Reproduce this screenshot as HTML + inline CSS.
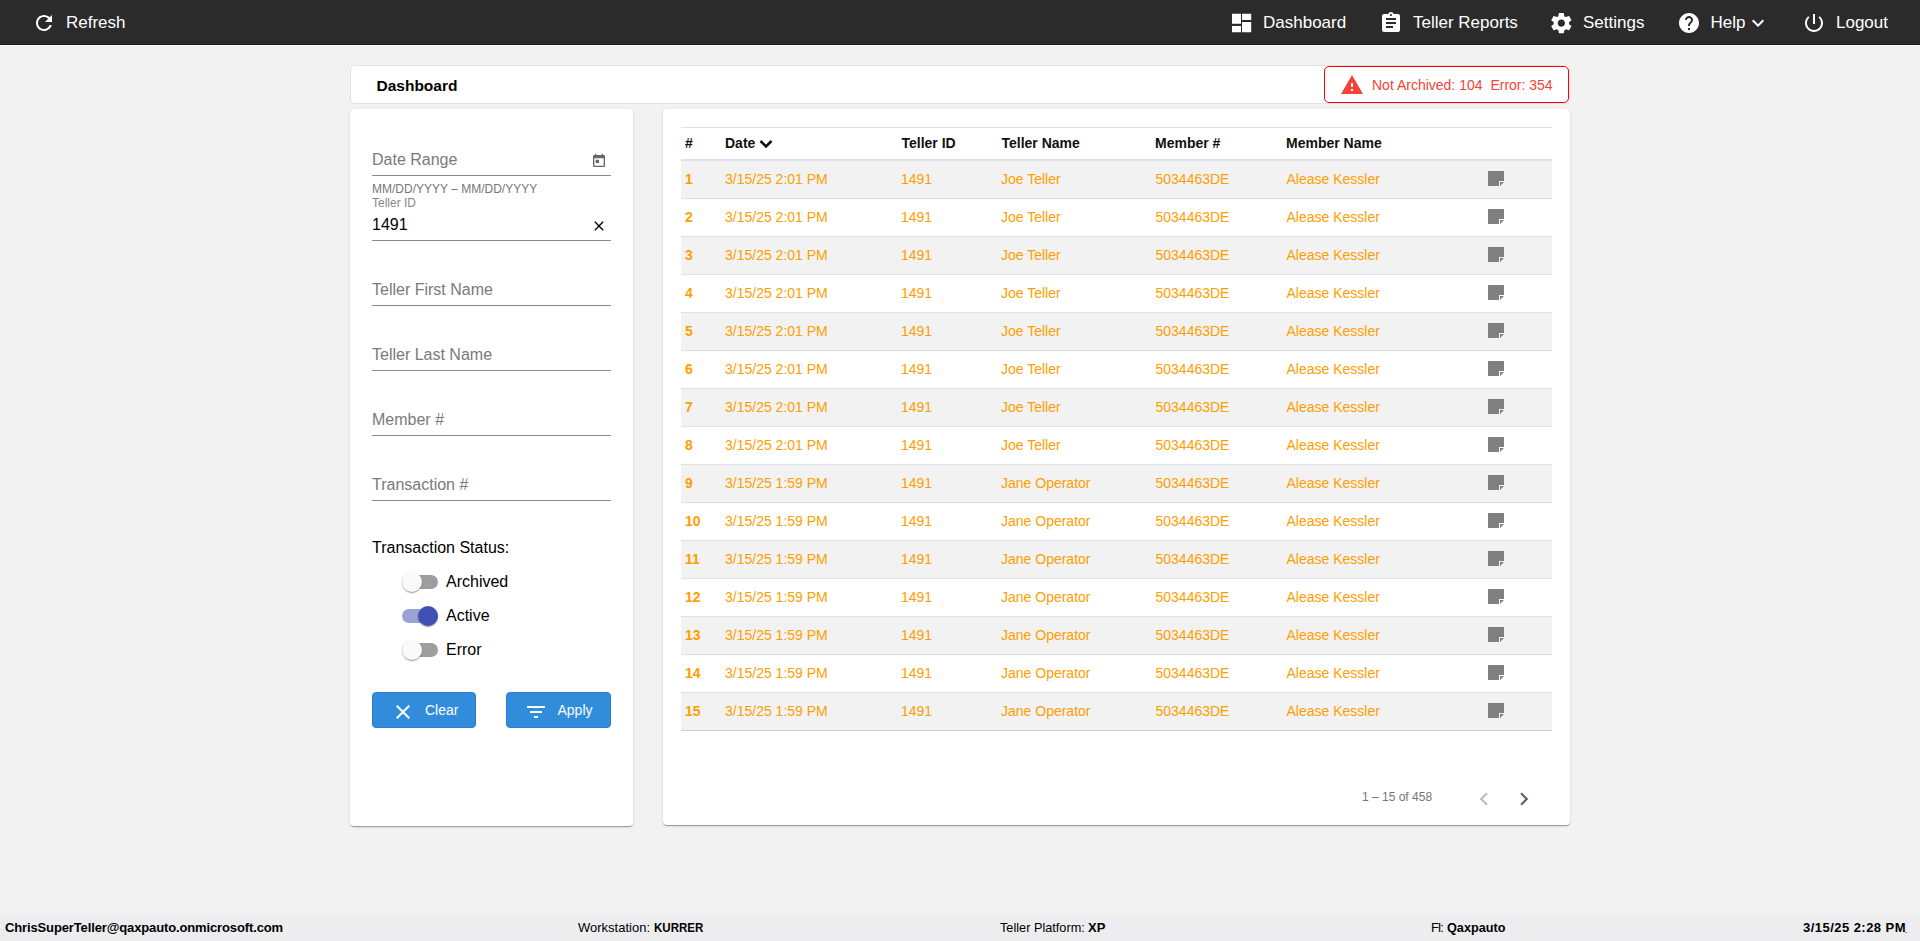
<!DOCTYPE html>
<html><head><meta charset="utf-8">
<style>
*{box-sizing:border-box;margin:0;padding:0}
html,body{width:1920px;height:941px;overflow:hidden}
body{background:#f2f2f2;font-family:"Liberation Sans",sans-serif;position:relative;color:#212121}
.abs{position:absolute}
.topbar{position:absolute;left:0;top:0;width:1920px;height:46px;background:#2b2b2b;border-bottom:1px solid #fff;box-shadow:inset 0 -1px 0 #1c1c1c}
.nav{position:absolute;top:0;height:44px;color:#fff;font-size:17px;line-height:44px;white-space:nowrap}
.nav svg{position:absolute;top:11px;left:0;fill:#fff}
.nav span{position:absolute;top:1px}
.card{position:absolute;background:#fff;border-radius:4px;box-shadow:0 2px 1px -1px rgba(0,0,0,.2),0 1px 1px 0 rgba(0,0,0,.14),0 1px 3px 0 rgba(0,0,0,.12)}
.t{position:absolute;white-space:nowrap}
.field{position:absolute;left:372px;width:239px;height:1px;background:#8a8a8a}
.ph{position:absolute;left:372px;font-size:16px;color:#7a7a7a;white-space:nowrap;line-height:20px}
.tog{position:absolute;left:402px;width:36px;height:14px;border-radius:7px;background:#9e9e9e}
.thumb{position:absolute;width:20px;height:20px;border-radius:50%;background:#fafafa;box-shadow:0 2px 1px -1px rgba(0,0,0,.2),0 1px 1px 0 rgba(0,0,0,.14),0 1px 3px 0 rgba(0,0,0,.12)}
.btn{position:absolute;top:692px;height:36px;background:#318cdb;border:1px solid #2a7fcb;border-radius:4px;color:#fff;font-size:14px}
.row{position:absolute;left:681px;width:871px;height:38px;border-bottom:1px solid #dee2e6;font-size:14px;color:#ff9e00}
.row.odd{background:#f2f2f2}
.row span{position:absolute;top:0;line-height:37px;white-space:nowrap}
.row svg{position:absolute;left:807px;top:10px}
.footer{position:absolute;left:0;top:915px;width:1920px;height:26px;background:#ededef;font-size:13px;color:#000}
.footer span{position:absolute;top:0;line-height:26px;white-space:nowrap}
</style></head>
<body>
<div class="topbar">
  <div class="nav" style="left:32px">
    <svg width="24" height="24" viewBox="0 0 24 24" style="left:0"><path d="M17.65 6.35C16.2 4.9 14.21 4 12 4c-4.42 0-7.99 3.58-7.99 8s3.57 8 7.99 8c3.73 0 6.84-2.55 7.73-6h-2.08c-.82 2.33-3.04 4-5.65 4-3.31 0-6-2.69-6-6s2.69-6 6-6c1.66 0 3.14.69 4.22 1.78L13 11h7V4l-2.35 2.35z"/></svg>
    <span style="left:34px">Refresh</span>
  </div>
  <div class="nav" style="left:1229px">
    <svg width="24" height="24" viewBox="0 0 24 24"><path d="M3 2.75h9v10H3z M3 14.9h9v6.3H3z M13 2.75h9.2v6.25H13z M13 10.9h9.2v10.3H13z"/></svg>
    <span style="left:34px">Dashboard</span>
  </div>
  <div class="nav" style="left:1379px">
    <svg width="24" height="24" viewBox="0 0 24 24"><path d="M19 3h-4.18C14.4 1.84 13.3 1 12 1c-1.3 0-2.4.84-2.82 2H5c-1.1 0-2 .9-2 2v14c0 1.1.9 2 2 2h14c1.1 0 2-.9 2-2V5c0-1.1-.9-2-2-2zm-7 0c.55 0 1 .45 1 1s-.45 1-1 1-1-.45-1-1 .45-1 1-1zm2 14H7v-2h7v2zm3-4H7v-2h10v2zm0-4H7V7h10v2z"/></svg>
    <span style="left:34px">Teller Reports</span>
  </div>
  <div class="nav" style="left:1549px">
    <svg width="24.7" height="24.3" viewBox="0 0 24 24" preserveAspectRatio="none" style="left:0.3px;top:10.6px"><path d="M19.43 12.98c.04-.32.07-.64.07-.98s-.03-.66-.07-.98l2.11-1.65c.19-.15.24-.42.12-.64l-2-3.46c-.12-.22-.39-.3-.61-.22l-2.49 1c-.52-.4-1.08-.73-1.69-.98l-.38-2.65C14.46 2.18 14.25 2 14 2h-4c-.25 0-.46.18-.49.42l-.38 2.65c-.61.25-1.17.59-1.69.98l-2.49-1c-.23-.09-.49 0-.61.22l-2 3.46c-.13.22-.07.49.12.64l2.11 1.65c-.04.32-.07.65-.07.98s.03.66.07.98l-2.11 1.65c-.19.15-.24.42-.12.64l2 3.46c.12.22.39.3.61.22l2.49-1c.52.4 1.08.73 1.69.98l.38 2.65c.03.24.24.42.49.42h4c.25 0 .46-.18.49-.42l.38-2.65c.61-.25 1.17-.59 1.69-.98l2.49 1c.23.09.49 0 .61-.22l2-3.46c.12-.22.07-.49-.12-.64l-2.11-1.65zM12 15.5c-1.93 0-3.5-1.57-3.5-3.5s1.57-3.5 3.5-3.5 3.5 1.57 3.5 3.5-1.57 3.5-3.5 3.5z"/></svg>
    <span style="left:34px">Settings</span>
  </div>
  <div class="nav" style="left:1677px">
    <svg width="24" height="24" viewBox="0 0 24 24"><path d="M12 2C6.48 2 2 6.48 2 12s4.48 10 10 10 10-4.48 10-10S17.52 2 12 2zm1 17h-2v-2h2v2zm2.07-7.75l-.9.92C13.45 12.9 13 13.5 13 15h-2v-.5c0-1.1.45-2.1 1.17-2.83l1.24-1.26c.37-.36.59-.86.59-1.41 0-1.1-.9-2-2-2s-2 .9-2 2H8c0-2.21 1.79-4 4-4s4 1.79 4 4c0 .88-.36 1.68-.93 2.25z"/></svg>
    <span style="left:33.5px">Help</span>
    <svg width="24" height="24" viewBox="0 0 24 24" style="left:69px"><path d="M16.59 8.59L12 13.17 7.41 8.59 6 10l6 6 6-6z"/></svg>
  </div>
  <div class="nav" style="left:1802px">
    <svg width="24" height="24" viewBox="0 0 24 24"><path d="M13 3h-2v10h2V3zm4.83 2.17l-1.42 1.42C17.99 7.86 19 9.81 19 12c0 3.87-3.13 7-7 7s-7-3.13-7-7c0-2.19 1.01-4.14 2.58-5.42L6.17 5.17C4.23 6.82 3 9.26 3 12c0 4.97 4.03 9 9 9s9-4.03 9-9c0-2.74-1.23-5.18-3.17-6.83z"/></svg>
    <span style="left:34px">Logout</span>
  </div>
</div>

<!-- title card -->
<div class="abs" style="left:350px;top:65px;width:1220px;height:39px;background:#fff;border:1px solid #e2e2e2;border-radius:4px">
  <div class="t" style="left:25.5px;top:1px;line-height:38px;font-size:15.5px;font-weight:bold;color:#000">Dashboard</div>
</div>
<div class="abs" style="left:1324px;top:66px;width:245px;height:37px;border:1.5px solid #f00;border-radius:5px;background:#fff">
  <svg class="abs" width="24" height="24" viewBox="0 0 24 24" style="left:15px;top:6px;fill:#f44336"><path d="M1 21h22L12 2 1 21zm12-3h-2v-2h2v2zm0-4h-2v-4h2v4z"/></svg>
  <div class="t" style="left:47px;top:1px;line-height:35px;font-size:14px;color:#f44336">Not Archived: 104 <span style="margin-left:4px">Error: 354</span></div>
</div>

<!-- left filter card -->
<div class="card" style="left:350px;top:109px;width:283px;height:717px"></div>
<div class="ph" style="top:150px">Date Range</div>
<svg class="abs" width="16" height="16" viewBox="0 0 24 24" style="left:591px;top:153px;fill:#666"><path d="M19 3h-1V1h-2v2H8V1H6v2H5c-1.11 0-1.99.9-1.99 2L3 19c0 1.1.89 2 2 2h14c1.1 0 2-.9 2-2V5c0-1.1-.9-2-2-2zm0 16H5V8h14v11zM7 10h5v5H7z"/></svg>
<div class="field" style="top:175px"></div>
<div class="t" style="left:372px;top:182px;font-size:12px;line-height:14px;color:#777">MM/DD/YYYY – MM/DD/YYYY</div>
<div class="t" style="left:372px;top:196px;font-size:12px;line-height:14px;color:#888">Teller ID</div>
<div class="t" style="left:372px;top:215px;font-size:16px;line-height:20px;color:#000">1491</div>
<svg class="abs" width="16" height="16" viewBox="0 0 24 24" style="left:590.5px;top:217.5px;fill:#000"><path d="M19 6.41L17.59 5 12 10.59 6.41 5 5 6.41 10.59 12 5 17.59 6.41 19 12 13.41 17.59 19 19 17.59 13.41 12z"/></svg>
<div class="field" style="top:240px"></div>
<div class="ph" style="top:280px">Teller First Name</div>
<div class="field" style="top:305px"></div>
<div class="ph" style="top:345px">Teller Last Name</div>
<div class="field" style="top:370px"></div>
<div class="ph" style="top:410px">Member #</div>
<div class="field" style="top:435px"></div>
<div class="ph" style="top:475px">Transaction #</div>
<div class="field" style="top:500px"></div>

<div class="t" style="left:372px;top:538px;font-size:16px;line-height:20px;color:#000">Transaction Status:</div>

<div class="tog" style="top:575px"></div>
<div class="thumb" style="left:402px;top:572px"></div>
<div class="t" style="left:446px;top:572px;font-size:16px;line-height:20px;color:#000">Archived</div>

<div class="tog" style="top:609px;background:#98a2d8"></div>
<div class="thumb" style="left:418px;top:606px;background:#3f51b5"></div>
<div class="t" style="left:446px;top:606px;font-size:16px;line-height:20px;color:#000">Active</div>

<div class="tog" style="top:643px"></div>
<div class="thumb" style="left:402px;top:640px"></div>
<div class="t" style="left:446px;top:640px;font-size:16px;line-height:20px;color:#000">Error</div>

<div class="btn" style="left:372px;width:104px">
  <svg class="abs" width="24" height="24" viewBox="0 0 24 24" style="left:17.7px;top:7px;fill:#fff"><path d="M19 6.41L17.59 5 12 10.59 6.41 5 5 6.41 10.59 12 5 17.59 6.41 19 12 13.41 17.59 19 19 17.59 13.41 12z"/></svg>
  <div class="t" style="left:52px;top:0;line-height:34px">Clear</div>
</div>
<div class="btn" style="left:506px;width:105px">
  <svg class="abs" width="24" height="24" viewBox="0 0 24 24" style="left:17px;top:7px;fill:#fff"><path d="M10 18h4v-2h-4v2zM3 6v2h18V6H3zm3 7h12v-2H6v2z"/></svg>
  <div class="t" style="left:50.5px;top:0;line-height:34px">Apply</div>
</div>

<!-- table card -->
<div class="card" style="left:663px;top:109px;width:907px;height:716px"></div>
<div class="abs" style="left:681px;top:127px;width:871px;height:1px;background:#dee2e6"></div>
<div class="abs" style="left:681px;top:128px;width:871px;height:33px;border-bottom:2px solid #dee2e6;font-size:14px;font-weight:bold;color:#111">
  <span class="t" style="left:4px;top:0;line-height:31px">#</span>
  <span class="t" style="left:44px;top:0;line-height:31px">Date</span>
  <svg class="abs" width="14" height="10" viewBox="0 0 14 10" style="left:78px;top:11px"><path d="M1.5 2 L7 7.5 L12.5 2" fill="none" stroke="#111" stroke-width="2.6"/></svg>
  <span class="t" style="left:220.5px;top:0;line-height:31px">Teller ID</span>
  <span class="t" style="left:320.5px;top:0;line-height:31px">Teller Name</span>
  <span class="t" style="left:474px;top:0;line-height:31px">Member #</span>
  <span class="t" style="left:605px;top:0;line-height:31px">Member Name</span>
</div>
<div id="rows"><div class="row odd" style="top:161px"><span style="left:4px;font-weight:bold">1</span><span style="left:44px">3/15/25 2:01 PM</span><span style="left:220px">1491</span><span style="left:320px">Joe Teller</span><span style="left:474.5px">5034463DE</span><span style="left:605.5px">Alease Kessler</span><svg width="17" height="16" viewBox="0 0 17 16"><path d="M0 0H16V10H11V15H0Z M12 11H16L12 15Z" fill="#808080"/></svg></div>
<div class="row" style="top:199px"><span style="left:4px;font-weight:bold">2</span><span style="left:44px">3/15/25 2:01 PM</span><span style="left:220px">1491</span><span style="left:320px">Joe Teller</span><span style="left:474.5px">5034463DE</span><span style="left:605.5px">Alease Kessler</span><svg width="17" height="16" viewBox="0 0 17 16"><path d="M0 0H16V10H11V15H0Z M12 11H16L12 15Z" fill="#808080"/></svg></div>
<div class="row odd" style="top:237px"><span style="left:4px;font-weight:bold">3</span><span style="left:44px">3/15/25 2:01 PM</span><span style="left:220px">1491</span><span style="left:320px">Joe Teller</span><span style="left:474.5px">5034463DE</span><span style="left:605.5px">Alease Kessler</span><svg width="17" height="16" viewBox="0 0 17 16"><path d="M0 0H16V10H11V15H0Z M12 11H16L12 15Z" fill="#808080"/></svg></div>
<div class="row" style="top:275px"><span style="left:4px;font-weight:bold">4</span><span style="left:44px">3/15/25 2:01 PM</span><span style="left:220px">1491</span><span style="left:320px">Joe Teller</span><span style="left:474.5px">5034463DE</span><span style="left:605.5px">Alease Kessler</span><svg width="17" height="16" viewBox="0 0 17 16"><path d="M0 0H16V10H11V15H0Z M12 11H16L12 15Z" fill="#808080"/></svg></div>
<div class="row odd" style="top:313px"><span style="left:4px;font-weight:bold">5</span><span style="left:44px">3/15/25 2:01 PM</span><span style="left:220px">1491</span><span style="left:320px">Joe Teller</span><span style="left:474.5px">5034463DE</span><span style="left:605.5px">Alease Kessler</span><svg width="17" height="16" viewBox="0 0 17 16"><path d="M0 0H16V10H11V15H0Z M12 11H16L12 15Z" fill="#808080"/></svg></div>
<div class="row" style="top:351px"><span style="left:4px;font-weight:bold">6</span><span style="left:44px">3/15/25 2:01 PM</span><span style="left:220px">1491</span><span style="left:320px">Joe Teller</span><span style="left:474.5px">5034463DE</span><span style="left:605.5px">Alease Kessler</span><svg width="17" height="16" viewBox="0 0 17 16"><path d="M0 0H16V10H11V15H0Z M12 11H16L12 15Z" fill="#808080"/></svg></div>
<div class="row odd" style="top:389px"><span style="left:4px;font-weight:bold">7</span><span style="left:44px">3/15/25 2:01 PM</span><span style="left:220px">1491</span><span style="left:320px">Joe Teller</span><span style="left:474.5px">5034463DE</span><span style="left:605.5px">Alease Kessler</span><svg width="17" height="16" viewBox="0 0 17 16"><path d="M0 0H16V10H11V15H0Z M12 11H16L12 15Z" fill="#808080"/></svg></div>
<div class="row" style="top:427px"><span style="left:4px;font-weight:bold">8</span><span style="left:44px">3/15/25 2:01 PM</span><span style="left:220px">1491</span><span style="left:320px">Joe Teller</span><span style="left:474.5px">5034463DE</span><span style="left:605.5px">Alease Kessler</span><svg width="17" height="16" viewBox="0 0 17 16"><path d="M0 0H16V10H11V15H0Z M12 11H16L12 15Z" fill="#808080"/></svg></div>
<div class="row odd" style="top:465px"><span style="left:4px;font-weight:bold">9</span><span style="left:44px">3/15/25 1:59 PM</span><span style="left:220px">1491</span><span style="left:320px">Jane Operator</span><span style="left:474.5px">5034463DE</span><span style="left:605.5px">Alease Kessler</span><svg width="17" height="16" viewBox="0 0 17 16"><path d="M0 0H16V10H11V15H0Z M12 11H16L12 15Z" fill="#808080"/></svg></div>
<div class="row" style="top:503px"><span style="left:4px;font-weight:bold">10</span><span style="left:44px">3/15/25 1:59 PM</span><span style="left:220px">1491</span><span style="left:320px">Jane Operator</span><span style="left:474.5px">5034463DE</span><span style="left:605.5px">Alease Kessler</span><svg width="17" height="16" viewBox="0 0 17 16"><path d="M0 0H16V10H11V15H0Z M12 11H16L12 15Z" fill="#808080"/></svg></div>
<div class="row odd" style="top:541px"><span style="left:4px;font-weight:bold">11</span><span style="left:44px">3/15/25 1:59 PM</span><span style="left:220px">1491</span><span style="left:320px">Jane Operator</span><span style="left:474.5px">5034463DE</span><span style="left:605.5px">Alease Kessler</span><svg width="17" height="16" viewBox="0 0 17 16"><path d="M0 0H16V10H11V15H0Z M12 11H16L12 15Z" fill="#808080"/></svg></div>
<div class="row" style="top:579px"><span style="left:4px;font-weight:bold">12</span><span style="left:44px">3/15/25 1:59 PM</span><span style="left:220px">1491</span><span style="left:320px">Jane Operator</span><span style="left:474.5px">5034463DE</span><span style="left:605.5px">Alease Kessler</span><svg width="17" height="16" viewBox="0 0 17 16"><path d="M0 0H16V10H11V15H0Z M12 11H16L12 15Z" fill="#808080"/></svg></div>
<div class="row odd" style="top:617px"><span style="left:4px;font-weight:bold">13</span><span style="left:44px">3/15/25 1:59 PM</span><span style="left:220px">1491</span><span style="left:320px">Jane Operator</span><span style="left:474.5px">5034463DE</span><span style="left:605.5px">Alease Kessler</span><svg width="17" height="16" viewBox="0 0 17 16"><path d="M0 0H16V10H11V15H0Z M12 11H16L12 15Z" fill="#808080"/></svg></div>
<div class="row" style="top:655px"><span style="left:4px;font-weight:bold">14</span><span style="left:44px">3/15/25 1:59 PM</span><span style="left:220px">1491</span><span style="left:320px">Jane Operator</span><span style="left:474.5px">5034463DE</span><span style="left:605.5px">Alease Kessler</span><svg width="17" height="16" viewBox="0 0 17 16"><path d="M0 0H16V10H11V15H0Z M12 11H16L12 15Z" fill="#808080"/></svg></div>
<div class="row odd" style="top:693px;border-bottom-color:#cdcdcd"><span style="left:4px;font-weight:bold">15</span><span style="left:44px">3/15/25 1:59 PM</span><span style="left:220px">1491</span><span style="left:320px">Jane Operator</span><span style="left:474.5px">5034463DE</span><span style="left:605.5px">Alease Kessler</span><svg width="17" height="16" viewBox="0 0 17 16"><path d="M0 0H16V10H11V15H0Z M12 11H16L12 15Z" fill="#808080"/></svg></div></div>

<div class="t" style="left:1362px;top:790px;font-size:12px;line-height:14px;color:#757575">1 – 15 of 458</div>
<svg class="abs" width="26" height="26" viewBox="0 0 24 24" style="left:1471.1px;top:785.8px;fill:#bdbdbd"><path d="M15.41 7.41L14 6l-6 6 6 6 1.41-1.41L10.83 12z"/></svg>
<svg class="abs" width="26" height="26" viewBox="0 0 24 24" style="left:1510.9px;top:785.8px;fill:#616161"><path d="M10 6L8.59 7.41 13.17 12l-4.58 4.59L10 18l6-6z"/></svg>

<div class="footer">
  <span style="left:5px;font-weight:bold;letter-spacing:-0.13px">ChrisSuperTeller@qaxpauto.onmicrosoft.com</span>
  <span id="f1" style="left:578px">Workstation:</span><span id="f2" style="left:654px;font-weight:bold;transform:scaleX(0.887);transform-origin:0 0">KURRER</span>
  <span id="f3" style="left:1000px;transform:scaleX(0.978);transform-origin:0 0">Teller Platform:</span><span id="f4" style="left:1088px;font-weight:bold">XP</span>
  <span id="f5" style="left:1431px;letter-spacing:-1.1px">FI:</span><span id="f6" style="left:1447px;font-weight:bold;transform:scaleX(0.975);transform-origin:0 0">Qaxpauto</span>
  <span style="left:1803px;font-weight:bold;letter-spacing:0.46px">3/15/25 2:28 PM</span>
  <div class="abs" style="left:1905px;top:17px;width:2px;height:1px;background:#7a8a9a"></div><div class="abs" style="left:1908px;top:17px;width:1px;height:1px;background:#d8d0d0"></div>
</div>
</body></html>
